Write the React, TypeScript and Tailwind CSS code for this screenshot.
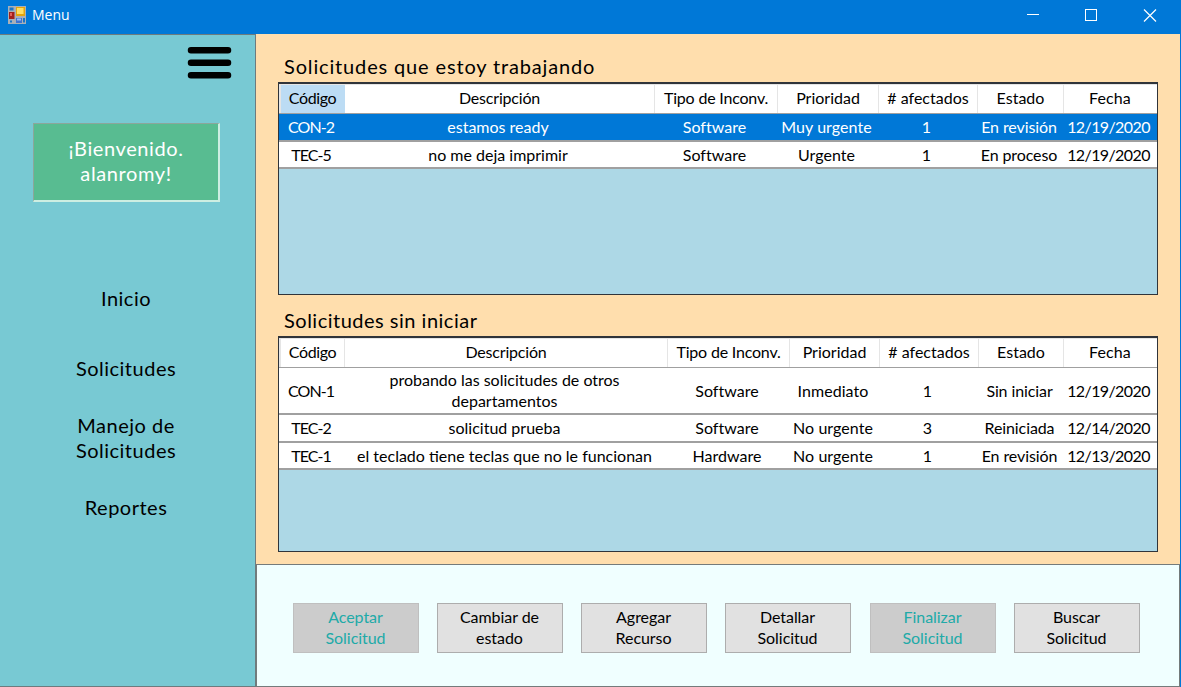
import React from "react";

type Row = { cells: string[]; selected?: boolean; tall?: boolean };

const headers = ["Código", "Descripción", "Tipo de Inconv.", "Prioridad", "# afectados", "Estado", "Fecha"];

const working: Row[] = [
  { cells: ["CON-2", "estamos ready", "Software", "Muy urgente", "1", "En revisión", "12/19/2020"], selected: true },
  { cells: ["TEC-5", "no me deja imprimir", "Software", "Urgente", "1", "En proceso", "12/19/2020"] },
];

const pending: Row[] = [
  { cells: ["CON-1", "probando las solicitudes de otros\ndepartamentos", "Software", "Inmediato", "1", "Sin iniciar", "12/19/2020"], tall: true },
  { cells: ["TEC-2", "solicitud prueba", "Software", "No urgente", "3", "Reiniciada", "12/14/2020"] },
  { cells: ["TEC-1", "el teclado tiene teclas que no le funcionan", "Hardware", "No urgente", "1", "En revisión", "12/13/2020"] },
];

const actions = [
  { label: "Aceptar\nSolicitud", disabled: true, gap: "" },
  { label: "Cambiar de\nestado", disabled: false, gap: "ml-[18px]" },
  { label: "Agregar\nRecurso", disabled: false, gap: "ml-[18px]" },
  { label: "Detallar\nSolicitud", disabled: false, gap: "ml-[18px]" },
  { label: "Finalizar\nSolicitud", disabled: true, gap: "ml-[19px]" },
  { label: "Buscar\nSolicitud", disabled: false, gap: "ml-[18px]" },
];

const headerTracking = [
  "tracking-[-0.4px]",
  "tracking-[-0.2px]",
  "tracking-[-0.2px]",
  "tracking-[0px]",
  "tracking-[0px]",
  "tracking-[0px]",
  "tracking-[0.1px]",
];

const cellTracking = [
  "tracking-[-0.95px]",
  "tracking-[0px]",
  "tracking-[0.03px]",
  "tracking-[0.05px]",
  "tracking-[0px]",
  "tracking-[-0.1px]",
  "tracking-[-0.6px]",
];

function Grid({ rows, columns, height, active }: { rows: Row[]; columns: string; height: string; active?: boolean }) {
  return (
    <div className={`flex w-[880px] flex-col border border-t-2 border-[#30343a] bg-[#add8e6] ${height}`}>
      <div className={`grid h-[29px] shrink-0 border-l-2 border-t border-[#e5e5e5] bg-white ${columns}`}>
        {headers.map((h, i) => (
          <div
            key={h}
            className={`flex items-center justify-center whitespace-nowrap border-r pb-[2px] text-[16px] leading-5 ${headerTracking[i]} ${
              active && i === 0 ? "border-[#bcdcf4] bg-[#bcdcf4]" : i === 6 ? "border-white" : "border-[#e5e5e5]"
            }`}
          >
            {h}
          </div>
        ))}
      </div>
      <div className="h-px shrink-0 bg-[#a0a0a0]" />
      {rows.map((r) => (
        <div
          key={r.cells[0]}
          className={`grid shrink-0 border-b-2 border-[#a0a0a0] pl-0.5 ${columns} ${r.tall ? "h-[47px]" : "h-[27.5px]"} ${
            r.selected ? "bg-[#0078d7] text-white" : "bg-white"
          }`}
        >
          {r.cells.map((c, i) => (
            <div
              key={i}
              className={`flex items-center justify-center whitespace-pre pr-[4px] text-center text-[16px] leading-[21px] ${
                r.tall && i === 1 ? "-mt-px" : ""
              } ${cellTracking[i]}`}
            >
              {c}
            </div>
          ))}
        </div>
      ))}
    </div>
  );
}

function AppIcon() {
  return (
    <svg width="18" height="18" viewBox="0 0 18 18">
      <path fill="#a9b0b8" d="M0 0h18v18H0z" />
      <path fill="#1976c9" d="M1.500 1.500h4v3h-4zM2 14.500h2v2H2zM15 12h2v4.500h-2z" />
      <path fill="#a3201c" d="M1 6h5.500v7H1z" />
      <path fill="#e0605a" d="M2 7h2v3H2z" />
      <path fill="#e4a50c" d="M8 1h9v9H8z" />
      <path fill="#ffdf62" d="M9 2h6.500v6H9z" />
      <path fill="#3f74d1" d="M8 12h6v5H8z" />
      <path fill="#9bbcf5" d="M9 12.500h4v2H9z" />
    </svg>
  );
}

export default function App() {
  return (
    <div className="flex h-[687px] w-[1181px] flex-col overflow-hidden bg-[#0078d7] font-['Lato',sans-serif] text-black">
      <header className="flex h-[34px] shrink-0 items-center pb-[5px] pl-2 text-white">
        <AppIcon />
        <span className="ml-[6px] font-['Open_Sans',sans-serif] text-[14px]">Menu</span>
        <svg className="ml-auto mr-[24px]" width="132" height="14" viewBox="0 0 132 14" fill="none" stroke="#fff" shapeRendering="crispEdges">
          <path d="M2 6.500h12M60.500 1.500h11v11h-11z" />
          <path shapeRendering="auto" strokeWidth="1.200" d="M119 1.500l12 12M131 1.500l-12 12" />
        </svg>
      </header>

      <div className="flex min-h-0 flex-1 pr-px">
        <aside className="flex w-[256px] shrink-0 flex-col items-center border border-l-0 border-[#6d7b7e] bg-[#78c9d3] text-center text-[20px] leading-[25px]">
          <svg className="ml-[164px] mt-[11px] shrink-0" width="46" height="34" viewBox="0 0 46 34" stroke="#000" strokeWidth="6.500" strokeLinecap="round">
            <path d="M4 4.300h37M4 16.800h37M4 29.200h37" />
          </svg>
          <div className="mr-[2px] mt-[43px] flex h-[79px] w-[187px] shrink-0 items-center justify-center border border-b-2 border-r-2 border-b-[#cdeee2] border-l-[#8ca69b] border-r-[#cdeee2] border-t-[#8ca69b] bg-[#58bc91] pb-[2px] text-white tracking-[0.6px]">
            <span>
              ¡Bienvenido.
              <br />
              alanromy!
            </span>
          </div>
          <nav className="flex flex-col items-center pr-[3px] tracking-[0.5px]">
            <a className="mt-[84px]">Inicio</a>
            <a className="mt-[45px]">Solicitudes</a>
            <a className="mt-[32px]">
              Manejo de
              <br />
              Solicitudes
            </a>
            <a className="mt-[32px]">Reportes</a>
          </nav>
        </aside>

        <main className="flex min-w-0 flex-1 flex-col bg-[#ffdead]">
          <section className="h-[530px] shrink-0 pl-[22px] pt-[19px]">
            <h2 className="h-[29px] pl-[6px] text-[20px] leading-[26px] tracking-[0.85px]">Solicitudes que estoy trabajando</h2>
            <Grid
              rows={working}
              active
              height="h-[213px]"
              columns="grid-cols-[64px_310px_123px_101px_99px_86px_93px]"
            />
            <h2 className="mt-[12px] h-[29px] pl-[6px] text-[20px] leading-[26px] tracking-[0.5px]">Solicitudes sin iniciar</h2>
            <Grid
              rows={pending}
              height="h-[216px]"
              columns="grid-cols-[64px_323px_122px_90px_99px_85px_93px]"
            />
          </section>
          <footer className="flex flex-1 items-start border border-[#747b7b] bg-[#f0ffff] pl-[36px] pt-[38px]">
            {actions.map((a, i) => (
              <button
                key={i}
                disabled={a.disabled}
                className={`flex h-[50px] w-[126px] shrink-0 items-center justify-center whitespace-pre border pb-[2px] pr-px text-center text-[16px] leading-[21px] tracking-[-0.05px] ${a.gap} ${
                  a.disabled ? "border-[#bfbfbf] bg-[#cccccc] text-[#20aaa8]" : "border-[#adadad] bg-[#e1e1e1]"
                }`}
              >
                {a.label}
              </button>
            ))}
          </footer>
        </main>
      </div>
    </div>
  );
}
